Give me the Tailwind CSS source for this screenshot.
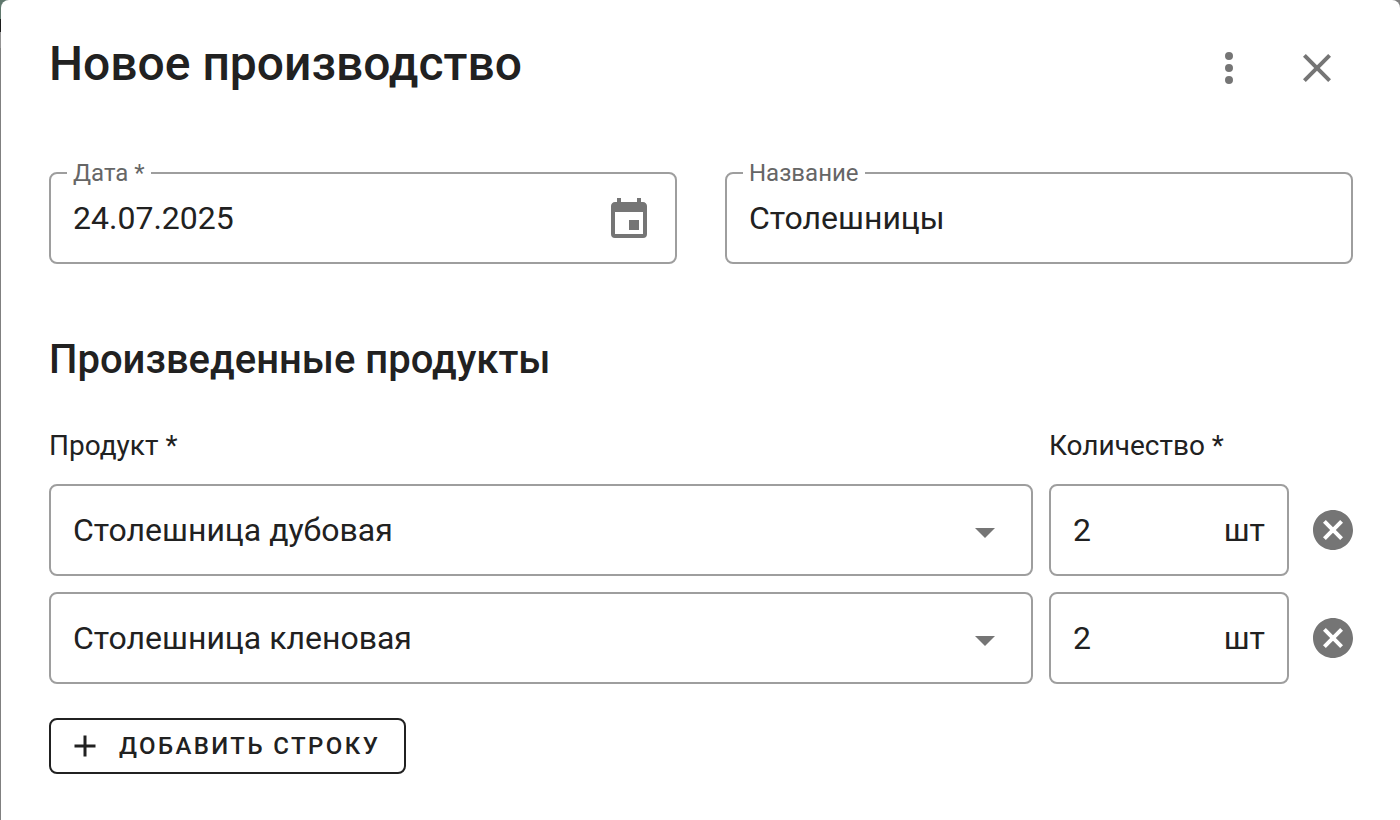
<!DOCTYPE html>
<html lang="ru">
<head>
  <meta charset="UTF-8">
  <meta name="viewport" content="width=device-width, initial-scale=1.0">
  <title>Новое производство</title>
  <script src="https://cdn.jsdelivr.net/npm/@tailwindcss/browser@4"></script>
</head>
<body class="bg-[#808080] bg-[linear-gradient(#5f776c_19px,#1c1c1c_19px,#1c1c1c_32px,#949494_32px,#949494_48px,#808080_48px)] bg-[length:12px_60px] bg-no-repeat pl-px font-[Roboto,sans-serif] text-[#212121]">
  <main class="min-h-screen rounded-t-lg bg-white pt-8 pr-[47px] pb-11 pl-12">
    <!-- Header -->
    <header class="flex items-center justify-between pr-3">
      <h1 class="text-5xl/16 font-medium">Новое производство</h1>
      <div class="flex gap-10 pt-2 text-[#757575]">
        <button type="button" aria-label="Меню">
          <svg class="size-12" viewBox="0 0 24 24" fill="currentColor"><path d="M12,16A2,2 0 0,1 14,18A2,2 0 0,1 12,20A2,2 0 0,1 10,18A2,2 0 0,1 12,16M12,10A2,2 0 0,1 14,12A2,2 0 0,1 12,14A2,2 0 0,1 10,12A2,2 0 0,1 12,10M12,4A2,2 0 0,1 14,6A2,2 0 0,1 12,8A2,2 0 0,1 10,6A2,2 0 0,1 12,4Z"/></svg>
        </button>
        <button type="button" aria-label="Закрыть">
          <svg class="size-12" viewBox="0 0 24 24" fill="currentColor"><path d="M19,6.41L17.59,5L12,10.59L6.41,5L5,6.41L10.59,12L5,17.59L6.41,19L12,13.41L17.59,19L19,17.59L13.41,12L19,6.41Z"/></svg>
        </button>
      </div>
    </header>

    <form>
      <!-- Date and name -->
      <div class="mt-[65px] grid grid-cols-2 gap-12">
        <fieldset class="min-w-0 rounded-lg border-2 border-[#9e9e9e] pr-[22px] pl-4">
          <legend class="px-1.5 text-2xl/6 text-[#666]"><label for="date">Дата *</label></legend>
          <div class="flex h-[77px] items-start pt-px pl-1.5">
            <input id="date" type="text" value="24.07.2025" class="h-16 min-w-0 flex-1 text-[32px] outline-none">
            <button type="button" aria-label="Выбрать дату" class="mt-2.5 text-[#757575]">
              <svg class="size-12" viewBox="0 0 24 24" fill="currentColor"><path d="M19,19H5V8H19M16,1V3H8V1H6V3H5C3.89,3 3,3.89 3,5V19A2,2 0 0,0 5,21H19A2,2 0 0,0 21,19V5C21,3.89 20.1,3 19,3H18V1M17,12H12V17H17V12Z"/></svg>
            </button>
          </div>
        </fieldset>
        <fieldset class="min-w-0 rounded-lg border-2 border-[#9e9e9e] pr-[22px] pl-4">
          <legend class="px-1.5 text-2xl/6 text-[#666]"><label for="name">Название</label></legend>
          <div class="flex h-[77px] items-start pt-px pl-1.5">
            <input id="name" type="text" value="Столешницы" class="h-16 min-w-0 flex-1 text-[32px] outline-none">
          </div>
        </fieldset>
      </div>

      <!-- Products -->
      <h2 class="mt-18 text-[40px]/12 font-medium">Произведенные продукты</h2>

      <div class="mt-10 grid grid-cols-[1fr_240px_48px] items-center gap-4">
        <label for="product-1" class="text-[28px]/11">Продукт *</label>
        <label for="count-1" class="col-span-2 text-[28px]/11">Количество *</label>

        <div class="relative">
          <select id="product-1" class="h-23 w-full appearance-none rounded-lg border-2 border-[#9e9e9e] bg-white pr-20 pl-[22px] text-[32px]">
            <option>Столешница дубовая</option>
            <option>Столешница кленовая</option>
          </select>
          <svg class="pointer-events-none absolute top-6 right-6 size-12 text-[#757575]" viewBox="0 0 24 24" fill="currentColor"><path d="M7,10L12,15L17,10H7Z"/></svg>
        </div>
        <div class="flex h-23 items-center rounded-lg border-2 border-[#9e9e9e] px-[22px] text-[32px]">
          <input id="count-1" type="text" value="2" class="min-w-0 flex-1 outline-none">
          <span>шт</span>
        </div>
        <button type="button" aria-label="Удалить строку" class="ml-1 text-[#757575]">
          <svg class="size-12" viewBox="0 0 24 24" fill="currentColor"><path d="M12,2C17.53,2 22,6.47 22,12C22,17.53 17.53,22 12,22C6.47,22 2,17.53 2,12C2,6.47 6.47,2 12,2M15.59,7L12,10.59L8.41,7L7,8.41L10.59,12L7,15.59L8.41,17L12,13.41L15.59,17L17,15.59L13.41,12L17,8.41L15.59,7Z"/></svg>
        </button>

        <div class="relative">
          <select id="product-2" aria-label="Продукт" class="h-23 w-full appearance-none rounded-lg border-2 border-[#9e9e9e] bg-white pr-20 pl-[22px] text-[32px]">
            <option>Столешница кленовая</option>
            <option>Столешница дубовая</option>
          </select>
          <svg class="pointer-events-none absolute top-6 right-6 size-12 text-[#757575]" viewBox="0 0 24 24" fill="currentColor"><path d="M7,10L12,15L17,10H7Z"/></svg>
        </div>
        <div class="flex h-23 items-center rounded-lg border-2 border-[#9e9e9e] px-[22px] text-[32px]">
          <input id="count-2" type="text" value="2" aria-label="Количество" class="min-w-0 flex-1 outline-none">
          <span>шт</span>
        </div>
        <button type="button" aria-label="Удалить строку" class="ml-1 text-[#757575]">
          <svg class="size-12" viewBox="0 0 24 24" fill="currentColor"><path d="M12,2C17.53,2 22,6.47 22,12C22,17.53 17.53,22 12,22C6.47,22 2,17.53 2,12C2,6.47 6.47,2 12,2M15.59,7L12,10.59L8.41,7L7,8.41L10.59,12L7,15.59L8.41,17L12,13.41L15.59,17L17,15.59L13.41,12L17,8.41L15.59,7Z"/></svg>
        </button>
      </div>

      <button type="button" class="mt-[34px] flex h-14 items-center gap-4 rounded-lg border-2 border-[#212121] pr-6 pl-4 text-2xl font-medium tracking-widest uppercase">
        <svg class="size-9" viewBox="0 0 24 24" fill="currentColor"><path d="M19,13H13V19H11V13H5V11H11V5H13V11H19V13Z"/></svg>
        Добавить строку
      </button>
    </form>
  </main>
</body>
</html>
